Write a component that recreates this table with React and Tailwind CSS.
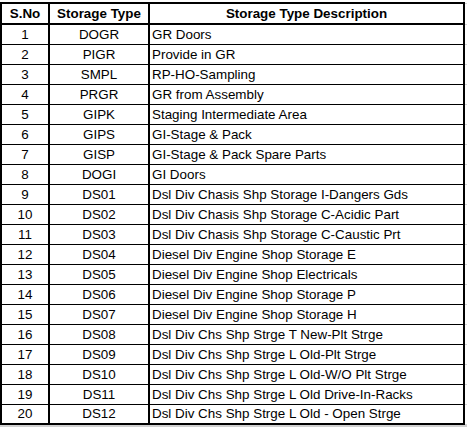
import React from "react";

const rows = [
  ["1", "DOGR", "GR Doors"],
  ["2", "PIGR", "Provide in GR"],
  ["3", "SMPL", "RP-HO-Sampling"],
  ["4", "PRGR", "GR from Assembly"],
  ["5", "GIPK", "Staging Intermediate Area"],
  ["6", "GIPS", "GI-Stage & Pack"],
  ["7", "GISP", "GI-Stage & Pack Spare Parts"],
  ["8", "DOGI", "GI Doors"],
  ["9", "DS01", "Dsl Div Chasis Shp Storage I-Dangers Gds"],
  ["10", "DS02", "Dsl Div Chasis Shp Storage C-Acidic Part"],
  ["11", "DS03", "Dsl Div Chasis Shp Storage C-Caustic Prt"],
  ["12", "DS04", "Diesel Div Engine Shop Storage E"],
  ["13", "DS05", "Diesel Div Engine Shop Electricals"],
  ["14", "DS06", "Diesel Div Engine Shop Storage P"],
  ["15", "DS07", "Diesel Div Engine Shop Storage H"],
  ["16", "DS08", "Dsl Div Chs Shp Strge T New-Plt Strge"],
  ["17", "DS09", "Dsl Div Chs Shp Strge L Old-Plt Strge"],
  ["18", "DS10", "Dsl Div Chs Shp Strge L Old-W/O Plt Strge"],
  ["19", "DS11", "Dsl Div Chs Shp Strge L Old Drive-In-Racks"],
  ["20", "DS12", "Dsl Div Chs Shp Strge L Old - Open Strge"],
];

function Row({ cells, h, line, bold }) {
  return (
    <div className="flex">
      <div className={`flex w-[465px] border-x-2 border-black ${line}`}>
        <div className={`flex w-[46px] ${h} items-center justify-center`}>{cells[0]}</div>
        <div className={`flex w-[102px] ${h} items-center justify-center border-x-2 border-black`}>{cells[1]}</div>
        <div className={`flex flex-1 ${h} items-center ${bold ? "justify-center" : "pl-[2px]"}`}>{cells[2]}</div>
      </div>
      <div className="w-[2px] border-b border-[#d4d4d4]" />
    </div>
  );
}

export default function App() {
  return (
    <div
      className="w-[467px] h-[427px] bg-white text-black text-[13.4px] leading-none overflow-hidden flex flex-col"
      style={{ fontFamily: '"Liberation Sans", Arial, sans-serif' }}
    >
      <div className="h-[2px]" />
      <div className="flex">
        <div className="w-[465px] h-[2px] bg-black" />
        <div className="w-[2px] h-[2px] border-b border-[#d4d4d4]" />
      </div>
      <div className="font-bold">
        <Row cells={["S.No", "Storage Type", "Storage Type Description"]} h="h-[19px]" line="border-b-2" bold />
      </div>
      {rows.map((r, i) => (
        <Row
          key={r[0]}
          cells={r}
          h={i === rows.length - 1 ? "h-[18px]" : "h-[19px]"}
          line={i === rows.length - 1 ? "border-b-2" : "border-b"}
        />
      ))}
      <div className="h-[2px] w-full bg-[#d0d0d0]" />
    </div>
  );
}
